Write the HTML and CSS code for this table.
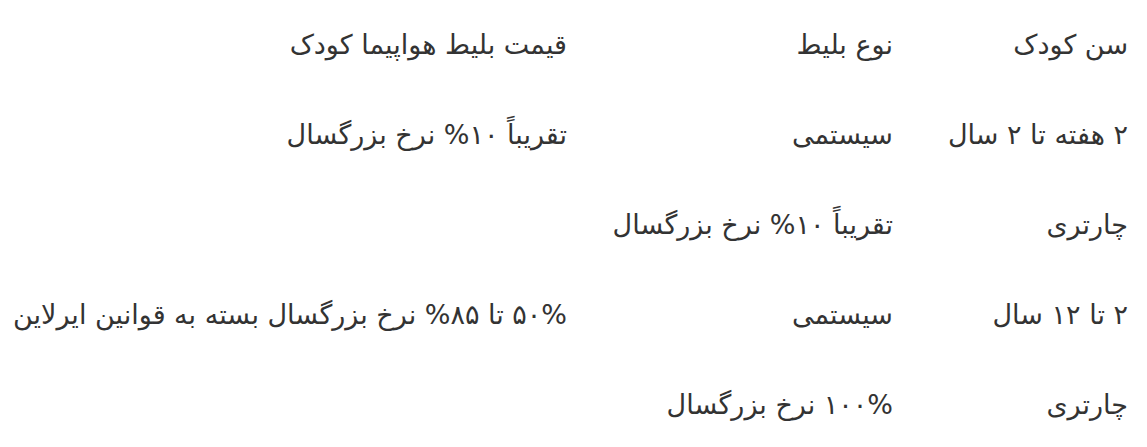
FILE: index.html
```html
<!DOCTYPE html>
<html lang="fa" dir="rtl">
<head>
<meta charset="utf-8">
<title>قیمت بلیط هواپیما کودک</title>
<link rel="stylesheet" href="styles.css">
</head>
<body>
<table class="fare-table">
  <colgroup>
    <col class="col-age">
    <col class="col-type">
    <col class="col-price">
  </colgroup>
  <tbody>
    <tr><td>سن کودک</td><td>نوع بلیط</td><td>قیمت بلیط هواپیما کودک</td></tr>
    <tr><td>۲ هفته تا ۲ سال</td><td>سیستمی</td><td>تقریباً ۱۰% نرخ بزرگسال</td></tr>
    <tr><td>چارتری</td><td>تقریباً ۱۰% نرخ بزرگسال</td><td></td></tr>
    <tr><td>۲ تا ۱۲ سال</td><td>سیستمی</td><td>۵۰% تا ۸۵% نرخ بزرگسال بسته به قوانین ایرلاین</td></tr>
    <tr><td>چارتری</td><td>۱۰۰% نرخ بزرگسال</td><td></td></tr>
  </tbody>
</table>
</body>
</html>
```
FILE: styles.css
```css
html, body {
  background: #ffffff;
}
body {
  margin: 0 8px;
  font-family: "DejaVu Sans", "Noto Sans", sans-serif;
  font-size: 27px;
  color: #333333;
}
.fare-table {
  width: 1131px;
  border-collapse: collapse;
  table-layout: fixed;
}
.col-age { width: 235px; }
.col-type { width: 326px; }
.col-price { width: 570px; }
.fare-table td {
  height: 90px;
  padding: 0 11px 0 0;
  text-align: right;
  vertical-align: middle;
  line-height: 40px;
  white-space: nowrap;
}
```
